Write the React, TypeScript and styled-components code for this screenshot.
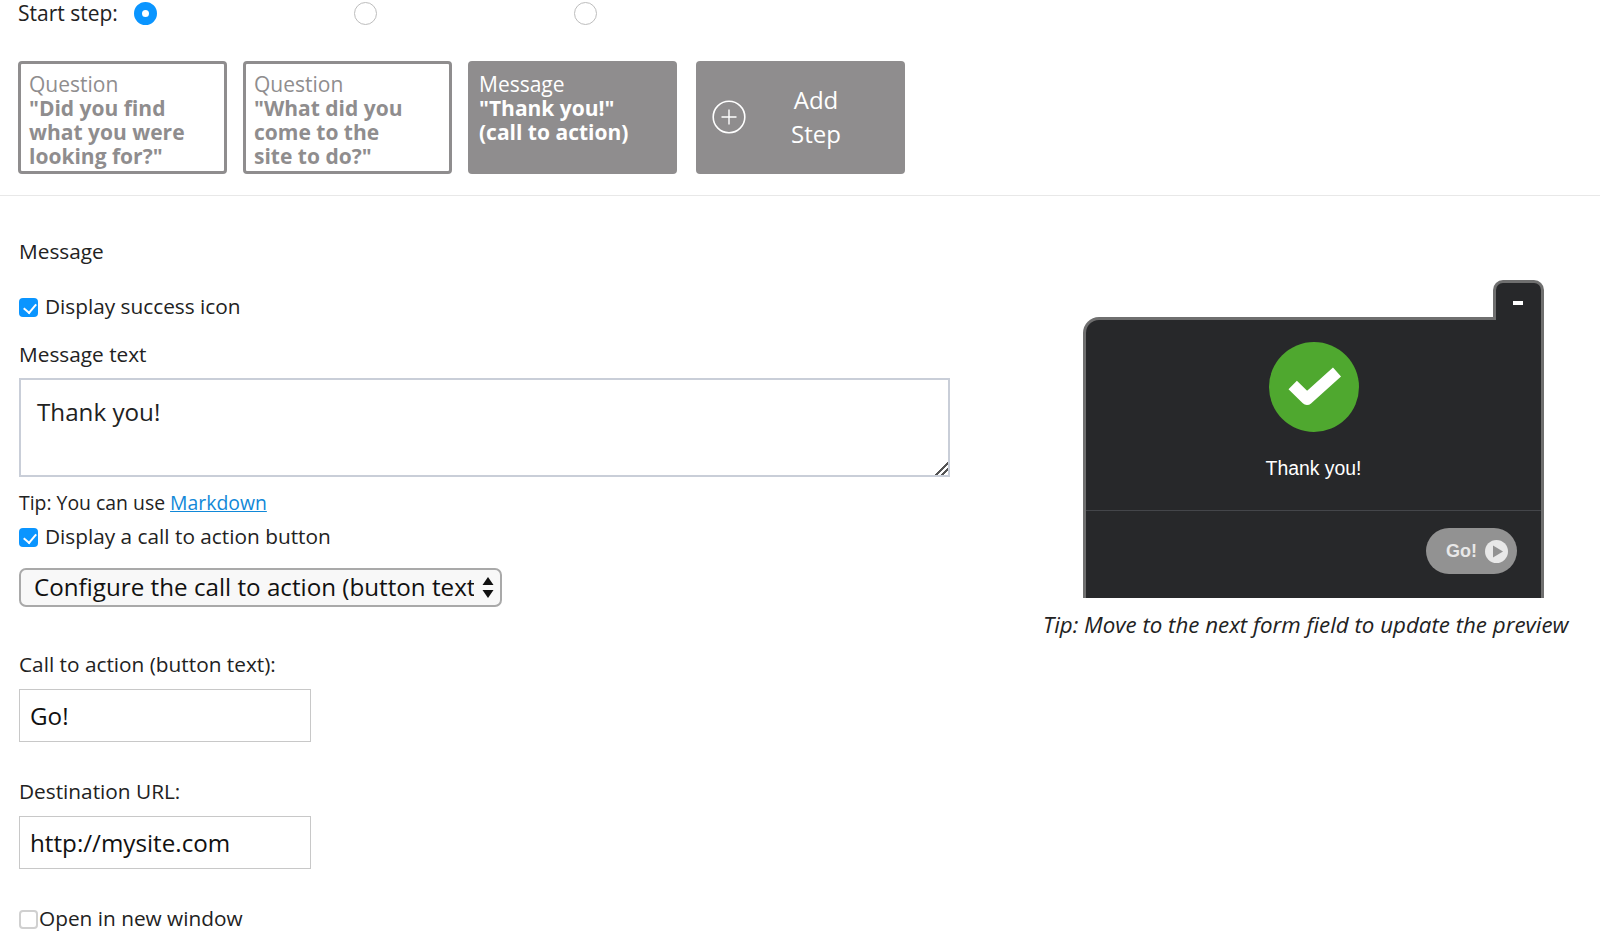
import React from 'react';
import styled, { createGlobalStyle } from 'styled-components';

const GlobalStyle = createGlobalStyle`
  html, body {
    margin: 0;
    padding: 0;
    height: 952px;
    overflow: hidden;
    background: #ffffff;
    font-family: 'Open Sans', sans-serif;
    color: #222222;
  }
  * {
    box-sizing: border-box;
  }
`;

const Page = styled.div`
  width: 1600px;
  height: 952px;
  overflow: hidden;
`;
const StartRow = styled.div`
  display: flex;
  align-items: center;
  height: 26px;
  padding-left: 18px;
  font-size: 21px;
`;
const StartLabel = styled.span`
  width: 116px;
`;
const RadioCell = styled.label`
  display: flex;
  width: 220px;
`;
const Radio = styled.input`
  appearance: none;
  width: 23px;
  height: 23px;
  margin: 0;
  border-radius: 50%;
  border: 1px solid #bdbdbd;
  background: #ffffff;
  &:checked {
    border: 8px solid #0a95ff;
  }
`;
const Steps = styled.div`
  display: flex;
  gap: 16px;
  margin-top: 35px;
  padding: 0 0 21px 18px;
  border-bottom: 1px solid #e8e8e8;
`;
const StepCard = styled.div<{ $active?: boolean }>`
  width: 209px;
  height: 113px;
  padding: ${(p) => (p.$active ? '11px' : '8px')};
  border-radius: 4px;
  border: ${(p) => (p.$active ? '0' : '3px solid #8f8d8e')};
  background: ${(p) => (p.$active ? '#8f8d8e' : '#ffffff')};
  color: ${(p) => (p.$active ? '#ffffff' : '#8f8d8e')};
  font-size: 21px;
  line-height: 24px;
  white-space: nowrap;
  overflow: hidden;
  & strong {
    display: block;
    font-weight: 700;
  }
`;
const AddCard = styled.div`
  display: flex;
  align-items: center;
  width: 209px;
  height: 113px;
  margin-left: 3px;
  padding: 0 0 2px 16px;
  border-radius: 4px;
  background: #8f8d8e;
  color: #ffffff;
`;
const AddText = styled.div`
  flex: 1;
  padding-right: 19px;
  text-align: center;
  font-size: 24px;
  line-height: 34px;
`;
const Main = styled.div`
  display: flex;
`;
const Form = styled.div`
  width: 951px;
  padding-left: 19px;
`;
const Line = styled.div<{ $top: number }>`
  display: flex;
  align-items: center;
  height: 28px;
  margin-top: ${(p) => p.$top}px;
  font-size: 20.8px;
  line-height: 28px;
  white-space: pre;
`;
const TipLine = styled(Line)`
  font-size: 19.4px;
`;
const Check = styled.input<{ $gap: number }>`
  appearance: none;
  position: relative;
  width: 19px;
  height: 19px;
  margin: 2px ${(p) => p.$gap}px 0 0;
  border-radius: 4px;
  border: 2px solid #d0d0d0;
  background: #ffffff;
  &:checked {
    border: 0;
    background: #0a95ff;
  }
  &:checked::after {
    content: '';
    position: absolute;
    left: 6.5px;
    top: 3.5px;
    width: 6px;
    height: 10px;
    border: solid #ffffff;
    border-width: 0 2px 2px 0;
    transform: rotate(40deg);
  }
`;
const MessageBox = styled.textarea`
  display: block;
  width: 931px;
  height: 99px;
  margin-top: 10px;
  padding: 15px 16px;
  border: 2px solid #c9ced8;
  border-radius: 0;
  outline: none;
  resize: both;
  font-family: 'Open Sans', sans-serif;
  font-size: 24.2px;
  line-height: 34px;
  color: #222222;
  &::-webkit-resizer {
    background: linear-gradient(
      135deg,
      transparent 0 56%,
      #555555 56% 64%,
      transparent 64% 76%,
      #555555 76% 84%,
      transparent 84%
    );
  }
`;
const DocLink = styled.a`
  color: #1188d8;
  text-decoration: underline;
`;
const SelectWrap = styled.div`
  position: relative;
  width: 483px;
  height: 39px;
  margin-top: 18px;
`;
const Select = styled.select`
  appearance: none;
  display: block;
  width: 100%;
  height: 100%;
  padding: 0 26px 2px 13px;
  border: 2px solid #a9a9a9;
  border-radius: 7px;
  outline: none;
  background: #f8f8f8;
  font-family: 'Open Sans', sans-serif;
  font-size: 24.2px;
  color: #111111;
`;
const Arrows = styled.svg`
  position: absolute;
  right: 7px;
  top: 7px;
  pointer-events: none;
`;
const TextInput = styled.input`
  display: block;
  width: 292px;
  height: 53px;
  margin-top: 11px;
  padding: 0 10px 1px;
  border: 1px solid #c8c8c8;
  border-radius: 0;
  outline: none;
  font-family: 'Open Sans', sans-serif;
  font-size: 24.2px;
  color: #111111;
`;
const PreviewColumn = styled.div`
  display: flex;
  flex-direction: column;
  width: 535px;
  padding-top: 84px;
  margin-left: 92px;
`;
const Widget = styled.div`
  display: flex;
  flex-direction: column;
  align-items: flex-end;
  width: 461px;
  margin-left: 40px;
`;
const WidgetTab = styled.div`
  display: flex;
  justify-content: center;
  position: relative;
  z-index: 1;
  width: 51px;
  height: 40px;
  margin-bottom: -3px;
  padding: 18px 2px 0 0;
  background: #27282a;
  border: 3px solid #6f6f6f;
  border-bottom: 0;
  border-radius: 10px 10px 0 0;
`;
const MinusMark = styled.span`
  width: 10px;
  height: 4px;
  background: #ffffff;
`;
const WidgetBody = styled.div`
  width: 100%;
  height: 281px;
  background: #27282a;
  border: 3px solid #6f6f6f;
  border-bottom: 0;
  border-radius: 16px 0 0 0;
`;
const SuccessPane = styled.div`
  display: flex;
  flex-direction: column;
  align-items: center;
  height: 191px;
  padding-top: 22px;
  border-bottom: 1px solid #44464a;
`;
const ThankText = styled.div`
  margin-top: 24px;
  font-family: 'Liberation Sans', Arial, sans-serif;
  font-size: 19.4px;
  line-height: 24px;
  color: #ffffff;
`;
const ActionPane = styled.div`
  display: flex;
  justify-content: flex-end;
  padding: 17px 24px 0 0;
`;
const GoButton = styled.div`
  display: flex;
  align-items: center;
  width: 91px;
  height: 46px;
  padding-left: 20px;
  border-radius: 23px;
  background: #929292;
  color: #e8e8e8;
  font-family: 'Liberation Sans', Arial, sans-serif;
  font-size: 18px;
  font-weight: 700;
  gap: 8px;
`;
const Caption = styled.div`
  margin-top: 13px;
  font-size: 22.3px;
  line-height: 28px;
  font-style: italic;
  white-space: nowrap;
  color: #222222;
`;

const App = () => (
  <Page>
    <GlobalStyle />
    <StartRow>
      <StartLabel>Start step:</StartLabel>
      <RadioCell>
        <Radio type="radio" name="start" defaultChecked />
      </RadioCell>
      <RadioCell>
        <Radio type="radio" name="start" />
      </RadioCell>
      <RadioCell>
        <Radio type="radio" name="start" />
      </RadioCell>
    </StartRow>
    <Steps>
      <StepCard>
        Question
        <strong>
          "Did you find
          <br />
          what you were
          <br />
          looking for?"
        </strong>
      </StepCard>
      <StepCard>
        Question
        <strong>
          "What did you
          <br />
          come to the
          <br />
          site to do?"
        </strong>
      </StepCard>
      <StepCard $active>
        Message
        <strong>
          "Thank you!"
          <br />
          (call to action)
        </strong>
      </StepCard>
      <AddCard>
        <svg width="34" height="34" viewBox="0 0 34 34" fill="none" stroke="#fff">
          <circle cx="17" cy="17" r="15.8" strokeWidth="1.6" />
          <path d="M17 9.5v15M9.5 17h15" strokeWidth="1.4" />
        </svg>
        <AddText>
          Add
          <br />
          Step
        </AddText>
      </AddCard>
    </Steps>
    <Main>
      <Form>
        <Line $top={41}>Message</Line>
        <Line $top={27}>
          <Check type="checkbox" $gap={7} defaultChecked />
          Display success icon
        </Line>
        <Line $top={20}>Message text</Line>
        <MessageBox defaultValue="Thank you!" />
        <TipLine $top={12}>
          Tip: You can use <DocLink href="#">Markdown</DocLink>
        </TipLine>
        <Line $top={5}>
          <Check type="checkbox" $gap={7} defaultChecked />
          Display a call to action button
        </Line>
        <SelectWrap>
          <Select defaultValue="cta">
            <option value="cta">Configure the call to action (button text)</option>
          </Select>
          <Arrows width="14" height="25" viewBox="0 0 14 25" fill="#111">
            <path d="M7 2l5.5 8h-11zM7 23l-5.5-8h11z" />
          </Arrows>
        </SelectWrap>
        <Line $top={43}>Call to action (button text):</Line>
        <TextInput defaultValue="Go!" />
        <Line $top={35}>Destination URL:</Line>
        <TextInput defaultValue="http://mysite.com" />
        <Line $top={35}>
          <Check type="checkbox" $gap={1} />
          Open in new window
        </Line>
      </Form>
      <PreviewColumn>
        <Widget>
          <WidgetTab>
            <MinusMark />
          </WidgetTab>
          <WidgetBody>
            <SuccessPane>
              <svg width="90" height="90" viewBox="0 0 90 90">
                <circle cx="45" cy="45" r="45" fill="#4fa82f" />
                <path d="M23.7 43L38 57l30-27" fill="none" stroke="#fff" strokeWidth="12" strokeLinejoin="round" />
              </svg>
              <ThankText>Thank you!</ThankText>
            </SuccessPane>
            <ActionPane>
              <GoButton>
                Go!
                <svg width="23" height="23" viewBox="0 0 23 23">
                  <circle cx="11.5" cy="11.5" r="11.5" fill="#e8e8e8" />
                  <path d="M8 5.5l10 6-10 6z" fill="#929292" />
                </svg>
              </GoButton>
            </ActionPane>
          </WidgetBody>
        </Widget>
        <Caption>Tip: Move to the next form field to update the preview</Caption>
      </PreviewColumn>
    </Main>
  </Page>
);

export default App;
